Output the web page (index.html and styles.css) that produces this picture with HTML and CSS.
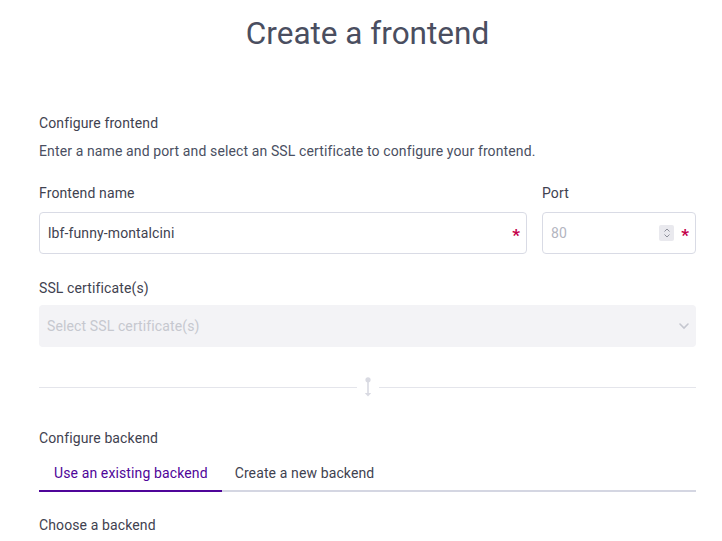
FILE: index.html
```html
<!DOCTYPE html>
<html>
<head>
<meta charset="utf-8">
<link rel="stylesheet" href="styles.css">
</head>
<body>
<div class="page">
  <h1 class="title">Create a frontend</h1>
  <section class="section">
    <div class="section-title first">Configure frontend</div>
    <p class="desc">Enter a name and port and select an SSL certificate to configure your frontend.</p>
    <div class="row">
      <div class="field grow">
        <label class="label">Frontend name</label>
        <div class="input">
          <span class="value">lbf-funny-montalcini</span>
          <span class="req">*</span>
        </div>
      </div>
      <div class="field port">
        <label class="label">Port</label>
        <div class="input">
          <span class="placeholder">80</span>
          <span class="spin">
            <svg width="10" height="12" viewBox="0 0 10 12"><path d="M2.5 4.5 L5 2 L7.5 4.5 M2.5 7.5 L5 10 L7.5 7.5" fill="none" stroke="#8d8f9a" stroke-width="1"/></svg>
          </span>
          <span class="req">*</span>
        </div>
      </div>
    </div>
    <div class="field ssl">
      <label class="label">SSL certificate(s)</label>
      <div class="select">
        <span class="select-ph">Select SSL certificate(s)</span>
        <svg class="chev" width="12" height="8" viewBox="0 0 12 8"><path d="M2 2 L6 6 L10 2" fill="none" stroke="#c4c6cf" stroke-width="1.6" stroke-linecap="round"/></svg>
      </div>
    </div>
  </section>
  <div class="divider">
    <span class="line"></span>
    <svg class="link" width="10" height="20" viewBox="0 0 10 20"><circle cx="5" cy="2.8" r="2.6" fill="#d9dae2"/><path d="M5 4 V16.5" stroke="#d9dae2" stroke-width="1.6"/><path d="M1.8 16 L5 19.5 L8.2 16 Z" fill="#d9dae2"/></svg>
    <span class="line"></span>
  </div>
  <section class="section">
    <div class="section-title second">Configure backend</div>
    <div class="tabs">
      <div class="tab active">Use an existing backend</div>
      <div class="tab">Create a new backend</div>
    </div>
    <div class="sub">Choose a backend</div>
  </section>
</div>
</body>
</html>
```
FILE: styles.css
```css
* { box-sizing: border-box; }
html, body { margin: 0; padding: 0; background: #fff; }
body { font-family: Roboto, "Liberation Sans", sans-serif; color: #3f4250; font-size: 14px; letter-spacing: 0.12px; }
.page { padding: 0 26px 0 39px; }
.title { margin: 0; padding-top: 14px; text-align: center; font-weight: 400; font-size: 31.5px; line-height: 40px; color: #4a4e60; letter-spacing: 0; }
.section { display: flex; flex-direction: column; }
.section-title { font-size: 14px; line-height: 20px; color: #3f4250; }
.section-title.first { margin-top: 59px; }
.section-title.second { margin-top: 31px; }
.desc { margin: 8px 0 0; line-height: 20px; color: #4a4f62; }
.row { display: flex; gap: 15px; margin-top: 22px; }
.field { display: flex; flex-direction: column; }
.grow { flex: 1; }
.port { width: 154px; }
.label { line-height: 20px; color: #3f4250; }
.input { margin-top: 9px; height: 42px; border: 1px solid #d9dbe5; border-radius: 4px; display: flex; align-items: center; padding: 0 6px 0 8px; }
.value { flex: 1; color: #3f4250; }
.placeholder { flex: 1; color: #b3b5bf; }
.req { color: #c4004a; font-size: 17px; font-weight: 700; margin-left: 7px; line-height: 1; padding-top: 4px; }
.spin { width: 15px; height: 16px; background: #e9e9ee; border-radius: 2px; display: flex; align-items: center; justify-content: center; }
.ssl { margin-top: 24px; }
.select { margin-top: 7px; height: 42px; border-radius: 4px; background: #f3f3f6; display: flex; align-items: center; padding: 0 6px 0 8px; justify-content: space-between; }
.select-ph { color: #c6c8cf; }
.divider { display: flex; align-items: center; gap: 6px; margin-top: 30px; height: 20px; }
.line { flex: 1; height: 1px; background: #e4e5eb; }
.link { display: block; }
.tabs { display: flex; margin-top: 15px; border-bottom: 2px solid #d4d6e2; }
.tab { padding: 0 14px 7px 15px; line-height: 20px; color: #3f4250; margin-bottom: -2px; border-bottom: 2px solid transparent; }
.tab.active { color: #4f0599; border-bottom-color: #4f0599; }
.tab + .tab { padding-left: 13px; }
.sub { margin-top: 23px; line-height: 20px; color: #3f4250; }
```
